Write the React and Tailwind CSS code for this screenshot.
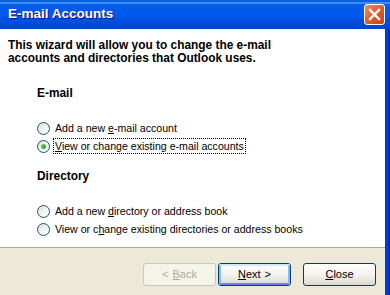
import React from 'react';

const font = { fontFamily: '"Liberation Sans", Arial, sans-serif' };

const Radio = ({ checked, focused, children }) => (
    <div className="flex items-center h-[18px] pl-[37px]">
        <span className="relative w-[13px] h-[13px] rounded-full border border-[#1c5180] bg-gradient-to-br from-[#dcdcd7] via-[#f3f3ef] to-white shrink-0">
            {checked && (
                <span className="absolute left-[3px] top-[3px] w-[5px] h-[5px] rounded-full bg-gradient-to-br from-[#5cdc58] to-[#1f9e1f]" />
            )}
        </span>
        <span className={`ml-[3px] px-[1px] leading-[14px] text-[10.6px] text-black border border-dotted ${focused ? 'border-black' : 'border-transparent'}`}>
            {children}
        </span>
    </div>
);

const Button = ({ children, disabled, isDefault }) => {
    if (disabled) {
        return (
            <div className="w-[73px] h-[23px] rounded-[3px] border border-[#c9c7ba] bg-[#f5f4ea] flex items-center justify-center text-[11px] text-[#aca899]">
                {children}
            </div>
        );
    }
    return (
        <div className="w-[73px] h-[23px] rounded-[3px] border border-[#003c74] bg-gradient-to-b from-white via-[#f4f3ee] to-[#dcd8cd] flex items-center justify-center text-[11px] text-black">
            <div className={`w-full h-full flex items-center justify-center rounded-[2px] ${isDefault ? 'border-2 border-[#8cb4f2] border-t-[#cee7ff] border-b-[#6982ee]' : ''}`}>
                {children}
            </div>
        </div>
    );
};

export default function App() {
    return (
        <div className="w-[390px] h-[295px] flex flex-col overflow-hidden bg-white" style={font}>
            {/* title bar */}
            <div className="h-[29px] shrink-0 flex items-center justify-between pl-[8px] pr-[5px] bg-gradient-to-b from-[#0a5fe0] via-[#0058ee] to-[#0044cc] relative">
                <div className="absolute left-0 right-0 top-[2px] h-[2px] bg-[#3d8ff8]" />
                <span className="relative text-white font-bold text-[13.5px] [text-shadow:1px_1px_0_#0f1089]">
                    E-mail Accounts
                </span>
                <div className="relative w-[21px] h-[21px] rounded-[3px] border border-white bg-gradient-to-br from-[#f08d6a] via-[#e25a2b] to-[#c74418] flex items-center justify-center">
                    <svg width="13" height="13" viewBox="0 0 13 13">
                        <path d="M2 2 L11 11 M11 2 L2 11" stroke="white" strokeWidth="2.4" strokeLinecap="square" />
                    </svg>
                </div>
            </div>

            <div className="flex flex-1">
                <div className="flex-1 flex flex-col">
                    {/* white body */}
                    <div className="h-[218px] bg-white flex flex-col">
                        <p className="mt-[10px] pl-[8px] text-[11.9px] leading-[13px] font-bold text-black">
                            This wizard will allow you to change the e-mail<br />
                            accounts and directories that Outlook uses.
                        </p>

                        <p className="mt-[22px] pl-[37px] text-[11.9px] leading-[13px] font-bold text-black">E-mail</p>
                        <div className="mt-[19px]">
                            <Radio>Add a new <u>e</u>-mail account</Radio>
                            <Radio checked focused><u>V</u>iew or change existing e-mail accounts</Radio>
                        </div>

                        <p className="mt-[15px] pl-[37px] text-[11.9px] leading-[13px] font-bold text-black">Directory</p>
                        <div className="mt-[19px]">
                            <Radio>Add a new <u>d</u>irectory or address book</Radio>
                            <Radio>View or c<u>h</u>ange existing directories or address books</Radio>
                        </div>
                    </div>

                    <div className="h-px bg-[#aca899]" />

                    {/* button strip */}
                    <div className="flex-1 bg-[#ece9d8] flex justify-end items-start pt-[15px] pr-[9px]">
                        <Button disabled><span>&lt;</span><u className="ml-[4px]">B</u>ack</Button>
                        <div className="ml-[2px]">
                            <Button isDefault><u>N</u>ext<span className="ml-[4px]">&gt;</span></Button>
                        </div>
                        <div className="ml-[12px]">
                            <Button><u>C</u>lose</Button>
                        </div>
                    </div>
                </div>
                {/* right frame */}
                <div className="w-[5px] bg-gradient-to-r from-[#0831d9] via-[#0041d0] to-[#001ea0]" />
            </div>
        </div>
    );
}
